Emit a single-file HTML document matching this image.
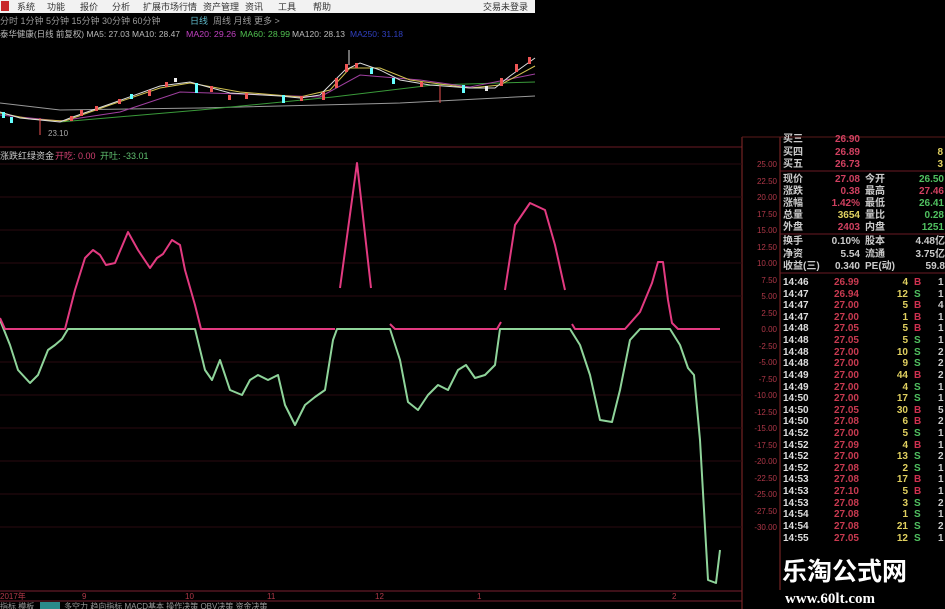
<!DOCTYPE html>
<html><head><meta charset="utf-8"><style>
html,body{margin:0;padding:0;background:#000;width:945px;height:609px;overflow:hidden}
svg{display:block}
text{font-family:"Liberation Sans","Noto Sans CJK SC",sans-serif}
</style></head><body>
<svg width="945" height="609" viewBox="0 0 945 609" xmlns="http://www.w3.org/2000/svg">
<rect width="945" height="609" fill="#000"/>
<rect x="0" y="0" width="535" height="13" fill="#f2f2f2"/>
<rect x="1" y="1" width="8" height="10" fill="#c8282a"/>
<g font-size="9" fill="#333">
<text x="17" y="10">系统</text><text x="47" y="10">功能</text><text x="80" y="10">报价</text><text x="112" y="10">分析</text><text x="143" y="10">扩展市场行情</text><text x="203" y="10">资产管理</text><text x="245" y="10">资讯</text><text x="278" y="10">工具</text><text x="313" y="10">帮助</text><text x="483" y="10">交易未登录</text>
</g>
<g font-size="9" fill="#999">
<text x="0" y="24">分时 1分钟 5分钟 15分钟 30分钟 60分钟</text><text x="190" y="24" fill="#5fb8c8">日线</text><text x="213" y="24">周线 月线 更多 &gt;</text>
</g>
<g font-size="8.5">
<text x="0" y="37" fill="#bbb" textLength="180" lengthAdjust="spacingAndGlyphs">泰华健康(日线 前复权) MA5: 27.03 MA10: 28.47</text>
<text x="186" y="37" fill="#c040c0" textLength="50" lengthAdjust="spacingAndGlyphs">MA20: 29.26</text>
<text x="240" y="37" fill="#50c050" textLength="50" lengthAdjust="spacingAndGlyphs">MA60: 28.99</text>
<text x="292" y="37" fill="#bbb" textLength="53" lengthAdjust="spacingAndGlyphs">MA120: 28.13</text>
<text x="350" y="37" fill="#3040c0" textLength="53" lengthAdjust="spacingAndGlyphs">MA250: 31.18</text>
</g>
<g fill="none" stroke-width="1">
<polyline stroke="#999" points="0,103 60,110 200,108 400,103 535,96"/>
<polyline stroke="#3a9a3a" points="60,122 200,110 333,97 433,85 535,82"/>
<polyline stroke="#a040a0" points="0,115 60,121 120,112 180,92 240,94 320,97 360,75 420,80 470,87 535,74"/>
<polyline stroke="#d0c050" points="0,113 30,119 65,121 110,105 160,88 190,83 240,92 300,97 330,90 350,68 380,68 410,80 470,88 500,85 535,66"/>
<polyline stroke="#ddd" points="0,112 20,118 60,122 70,118 110,104 160,86 190,82 230,93 280,96 300,98 320,95 345,70 360,63 380,70 400,80 430,85 470,88 495,88 510,76 535,58"/>
</g>
<g>
<rect x="2" y="112" width="3" height="6" fill="#6ff"/><rect x="10" y="117" width="3" height="6" fill="#6ff"/>
<rect x="70" y="116" width="3" height="5" fill="#e55"/><rect x="80" y="110" width="3" height="6" fill="#e55"/><rect x="95" y="106" width="3" height="5" fill="#e55"/><rect x="118" y="99" width="3" height="5" fill="#e55"/><rect x="130" y="94" width="3" height="5" fill="#6ff"/><rect x="148" y="90" width="3" height="6" fill="#e55"/><rect x="165" y="82" width="3" height="5" fill="#e55"/><rect x="174" y="78" width="3" height="4" fill="#eee"/><rect x="195" y="83" width="3" height="10" fill="#6ff"/><rect x="210" y="86" width="3" height="6" fill="#e55"/><rect x="228" y="95" width="3" height="5" fill="#e55"/><rect x="245" y="93" width="3" height="6" fill="#e55"/><rect x="282" y="95" width="3" height="8" fill="#6ff"/><rect x="300" y="96" width="3" height="5" fill="#e55"/><rect x="322" y="92" width="3" height="8" fill="#e55"/><rect x="335" y="78" width="3" height="10" fill="#e55"/><rect x="345" y="64" width="3" height="8" fill="#e55"/><rect x="355" y="63" width="3" height="5" fill="#e55"/><rect x="370" y="68" width="3" height="6" fill="#6ff"/><rect x="392" y="78" width="3" height="6" fill="#6ff"/><rect x="420" y="82" width="3" height="5" fill="#e55"/><rect x="462" y="85" width="3" height="8" fill="#6ff"/><rect x="485" y="86" width="3" height="5" fill="#eee"/><rect x="500" y="78" width="3" height="8" fill="#e55"/><rect x="515" y="64" width="3" height="8" fill="#e55"/><rect x="528" y="57" width="3" height="7" fill="#e55"/>
<line x1="349" y1="50" x2="349" y2="65" stroke="#ddd"/><line x1="40" y1="118" x2="40" y2="135" stroke="#e55"/><line x1="440" y1="85" x2="440" y2="103" stroke="#e55"/>
<text x="48" y="136" font-size="8" fill="#aaa">23.10</text>
</g>
<line x1="0" y1="147" x2="742" y2="147" stroke="#6a1a24"/>
<line x1="742" y1="137" x2="742" y2="609" stroke="#8a2a2a"/>
<line x1="780" y1="137" x2="780" y2="590" stroke="#8a2a2a"/>
<line x1="742" y1="137" x2="945" y2="137" stroke="#5a1a1a"/>
<g stroke="#2a0a10" stroke-width="1">
<line x1="0" y1="164" x2="742" y2="164"/><line x1="0" y1="197" x2="742" y2="197"/><line x1="0" y1="230" x2="742" y2="230"/><line x1="0" y1="263" x2="742" y2="263"/><line x1="0" y1="296" x2="742" y2="296"/><line x1="0" y1="362" x2="742" y2="362"/><line x1="0" y1="395" x2="742" y2="395"/><line x1="0" y1="428" x2="742" y2="428"/><line x1="0" y1="461" x2="742" y2="461"/><line x1="0" y1="494" x2="742" y2="494"/><line x1="0" y1="527" x2="742" y2="527"/>
</g>
<g font-size="9">
<text x="0" y="159" fill="#ccc">涨跌红绿资金</text><text x="55" y="159" fill="#d04070">开吃: 0.00</text><text x="100" y="159" fill="#60c070">开吐: -33.01</text>
</g>
<g font-size="8" fill="#b03848" text-anchor="end">
<text x="777" y="167">25.00</text><text x="777" y="184">22.50</text><text x="777" y="200">20.00</text><text x="777" y="217">17.50</text><text x="777" y="233">15.00</text><text x="777" y="250">12.50</text><text x="777" y="266">10.00</text><text x="777" y="283">7.50</text><text x="777" y="299">5.00</text><text x="777" y="316">2.50</text><text x="777" y="332">0.00</text><text x="777" y="349">-2.50</text><text x="777" y="365">-5.00</text><text x="777" y="382">-7.50</text><text x="777" y="398">-10.00</text><text x="777" y="415">-12.50</text><text x="777" y="431">-15.00</text><text x="777" y="448">-17.50</text><text x="777" y="464">-20.00</text><text x="777" y="481">-22.50</text><text x="777" y="497">-25.00</text><text x="777" y="514">-27.50</text><text x="777" y="530">-30.00</text>
</g>
<g fill="none" stroke-width="2" stroke-linejoin="round">
<polyline stroke="#8fd49a" points="0,320 10,345 18,370 30,383 38,375 48,350 55,345 62,339 68,329 195,329 205,370 212,380 220,360 230,390 242,395 250,380 258,375 268,380 278,375 285,405 295,425 305,405 315,397 325,390 333,340 337,329 390,329 400,360 408,402 418,410 428,395 438,385 448,390 458,370 466,365 475,378 485,375 495,365 500,329 570,329 580,345 590,375 600,420 612,422 620,390 630,340 640,329 670,329 680,345 688,368 694,375 700,440 708,580 716,583 720,550"/>
<polyline stroke="#e23a80" points="0,318 5,329 65,329 75,290 85,258 93,250 100,255 106,265 115,263 128,232 138,250 150,268 157,258 163,254 172,240 180,245 185,270 195,305 201,329 335,329"/>
<polyline stroke="#e23a80" points="340,288 357,163 371,288"/>
<polyline stroke="#e23a80" points="390,324 395,329 497,329 501,322"/>
<polyline stroke="#e23a80" points="505,290 515,225 530,203 545,210 555,245 565,290"/>
<polyline stroke="#e23a80" points="572,324 575,329 625,329 640,312 652,283 658,262 663,262 668,300 672,323 678,329 720,329"/>
</g>
<g font-size="10" font-weight="bold">
<text x="783" y="142" fill="#ccc">买三</text><text x="860" y="142" fill="#d04060" text-anchor="end">26.90</text>
<text x="783" y="155" fill="#ccc">买四</text><text x="860" y="155" fill="#d04060" text-anchor="end">26.89</text><text x="943" y="155" fill="#e0d060" text-anchor="end">8</text>
<text x="783" y="167" fill="#ccc">买五</text><text x="860" y="167" fill="#d04060" text-anchor="end">26.73</text><text x="943" y="167" fill="#e0d060" text-anchor="end">3</text>
</g>
<line x1="780" y1="171" x2="945" y2="171" stroke="#6a1a24"/>
<g font-size="10" font-weight="bold">
<text x="783" y="182" fill="#ccc">现价</text><text x="860" y="182" fill="#d04060" text-anchor="end">27.08</text><text x="865" y="182" fill="#ccc">今开</text><text x="944" y="182" fill="#50c060" text-anchor="end">26.50</text>
<text x="783" y="194" fill="#ccc">涨跌</text><text x="860" y="194" fill="#d04060" text-anchor="end">0.38</text><text x="865" y="194" fill="#ccc">最高</text><text x="944" y="194" fill="#d04060" text-anchor="end">27.46</text>
<text x="783" y="206" fill="#ccc">涨幅</text><text x="860" y="206" fill="#d04060" text-anchor="end">1.42%</text><text x="865" y="206" fill="#ccc">最低</text><text x="944" y="206" fill="#50c060" text-anchor="end">26.41</text>
<text x="783" y="218" fill="#ccc">总量</text><text x="860" y="218" fill="#e0d060" text-anchor="end">3654</text><text x="865" y="218" fill="#ccc">量比</text><text x="944" y="218" fill="#50c060" text-anchor="end">0.28</text>
<text x="783" y="230" fill="#ccc">外盘</text><text x="860" y="230" fill="#d04060" text-anchor="end">2403</text><text x="865" y="230" fill="#ccc">内盘</text><text x="944" y="230" fill="#50c060" text-anchor="end">1251</text>
</g>
<line x1="780" y1="234" x2="945" y2="234" stroke="#6a1a24"/>
<g font-size="10" font-weight="bold" fill="#ccc">
<text x="783" y="244">换手</text><text x="860" y="244" text-anchor="end">0.10%</text><text x="865" y="244">股本</text><text x="945" y="244" text-anchor="end">4.48亿</text>
<text x="783" y="257">净资</text><text x="860" y="257" text-anchor="end">5.54</text><text x="865" y="257">流通</text><text x="945" y="257" text-anchor="end">3.75亿</text>
<text x="783" y="269">收益(三)</text><text x="860" y="269" text-anchor="end">0.340</text><text x="865" y="269">PE(动)</text><text x="945" y="269" text-anchor="end">59.8</text>
</g>
<line x1="780" y1="273" x2="945" y2="273" stroke="#6a1a24"/>
<g font-size="10" font-weight="bold">
<g fill="#ddd">
<text x="783" y="285">14:46</text><text x="783" y="297">14:47</text><text x="783" y="308">14:47</text><text x="783" y="320">14:47</text><text x="783" y="331">14:48</text><text x="783" y="343">14:48</text><text x="783" y="355">14:48</text><text x="783" y="366">14:48</text><text x="783" y="378">14:49</text><text x="783" y="390">14:49</text><text x="783" y="401">14:50</text><text x="783" y="413">14:50</text><text x="783" y="424">14:50</text><text x="783" y="436">14:52</text><text x="783" y="448">14:52</text><text x="783" y="459">14:52</text><text x="783" y="471">14:52</text><text x="783" y="482">14:53</text><text x="783" y="494">14:53</text><text x="783" y="506">14:53</text><text x="783" y="517">14:54</text><text x="783" y="529">14:54</text><text x="783" y="541">14:55</text>
</g>
<g fill="#c83a50" text-anchor="end">
<text x="859" y="285">26.99</text><text x="859" y="297">26.94</text><text x="859" y="308">27.00</text><text x="859" y="320">27.00</text><text x="859" y="331">27.05</text><text x="859" y="343">27.05</text><text x="859" y="355">27.00</text><text x="859" y="366">27.00</text><text x="859" y="378">27.00</text><text x="859" y="390">27.00</text><text x="859" y="401">27.00</text><text x="859" y="413">27.05</text><text x="859" y="424">27.08</text><text x="859" y="436">27.00</text><text x="859" y="448">27.09</text><text x="859" y="459">27.00</text><text x="859" y="471">27.08</text><text x="859" y="482">27.08</text><text x="859" y="494">27.10</text><text x="859" y="506">27.08</text><text x="859" y="517">27.08</text><text x="859" y="529">27.08</text><text x="859" y="541">27.05</text>
</g>
<g fill="#e0d060" text-anchor="end">
<text x="908" y="285">4</text><text x="908" y="297">12</text><text x="908" y="308">5</text><text x="908" y="320">1</text><text x="908" y="331">5</text><text x="908" y="343">5</text><text x="908" y="355">10</text><text x="908" y="366">9</text><text x="908" y="378">44</text><text x="908" y="390">4</text><text x="908" y="401">17</text><text x="908" y="413">30</text><text x="908" y="424">6</text><text x="908" y="436">5</text><text x="908" y="448">4</text><text x="908" y="459">13</text><text x="908" y="471">2</text><text x="908" y="482">17</text><text x="908" y="494">5</text><text x="908" y="506">3</text><text x="908" y="517">1</text><text x="908" y="529">21</text><text x="908" y="541">12</text>
</g>
<g>
<text x="914" y="285" fill="#d03050">B</text><text x="914" y="297" fill="#50c060">S</text><text x="914" y="308" fill="#d03050">B</text><text x="914" y="320" fill="#d03050">B</text><text x="914" y="331" fill="#d03050">B</text><text x="914" y="343" fill="#50c060">S</text><text x="914" y="355" fill="#50c060">S</text><text x="914" y="366" fill="#50c060">S</text><text x="914" y="378" fill="#d03050">B</text><text x="914" y="390" fill="#50c060">S</text><text x="914" y="401" fill="#50c060">S</text><text x="914" y="413" fill="#d03050">B</text><text x="914" y="424" fill="#d03050">B</text><text x="914" y="436" fill="#50c060">S</text><text x="914" y="448" fill="#d03050">B</text><text x="914" y="459" fill="#50c060">S</text><text x="914" y="471" fill="#50c060">S</text><text x="914" y="482" fill="#d03050">B</text><text x="914" y="494" fill="#d03050">B</text><text x="914" y="506" fill="#50c060">S</text><text x="914" y="517" fill="#50c060">S</text><text x="914" y="529" fill="#50c060">S</text><text x="914" y="541" fill="#50c060">S</text>
</g>
<g fill="#ccc">
<text x="938" y="285">1</text><text x="938" y="297">1</text><text x="938" y="308">4</text><text x="938" y="320">1</text><text x="938" y="331">1</text><text x="938" y="343">1</text><text x="938" y="355">2</text><text x="938" y="366">2</text><text x="938" y="378">2</text><text x="938" y="390">1</text><text x="938" y="401">1</text><text x="938" y="413">5</text><text x="938" y="424">2</text><text x="938" y="436">1</text><text x="938" y="448">1</text><text x="938" y="459">2</text><text x="938" y="471">1</text><text x="938" y="482">1</text><text x="938" y="494">1</text><text x="938" y="506">2</text><text x="938" y="517">1</text><text x="938" y="529">2</text><text x="938" y="541">1</text>
</g>
</g>
<text x="782" y="580" font-size="25" font-weight="bold" fill="#fff" style="font-family:'Noto Sans CJK SC',sans-serif">乐淘公式网</text>
<text x="785" y="603" font-size="15" font-weight="bold" fill="#fff" style="font-family:'Liberation Serif',serif">www.60lt.com</text>
<line x1="0" y1="591" x2="742" y2="591" stroke="#7a2030"/>
<line x1="0" y1="601" x2="742" y2="601" stroke="#7a2030"/>
<g font-size="8" fill="#b03848">
<text x="0" y="599">2017年</text><text x="82" y="599">9</text><text x="185" y="599">10</text><text x="267" y="599">11</text><text x="375" y="599">12</text><text x="477" y="599">1</text><text x="672" y="599">2</text>
</g>
<g font-size="8" fill="#999">
<text x="0" y="609">指标 模板</text><rect x="40" y="602" width="20" height="7" fill="#2a8a8a"/><text x="64" y="609">多空力 趋向指标 MACD基本 操作决策 OBV决策 资金决策</text>
</g>
</svg>
</body></html>
